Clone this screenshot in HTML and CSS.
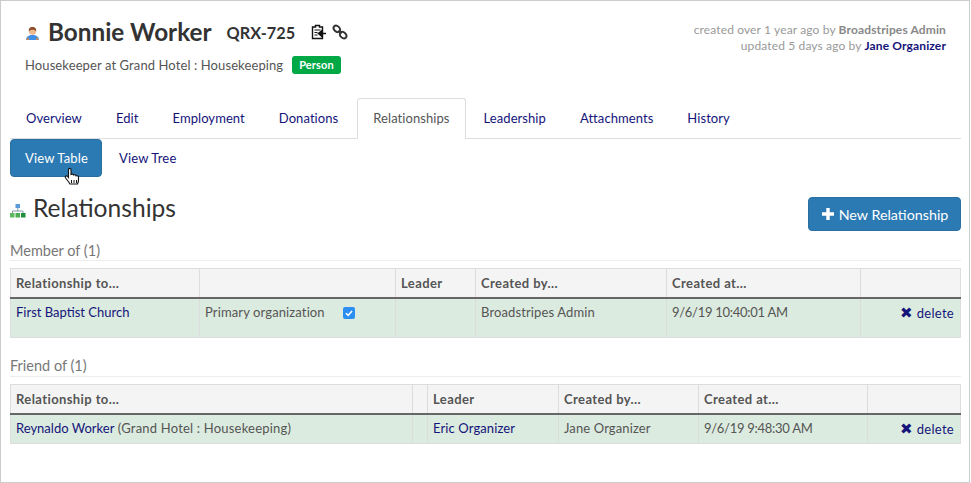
FILE: index.html
```html
<!DOCTYPE html>
<html lang="en">
<head>
<meta charset="utf-8">
<title>Bonnie Worker</title>
<link rel="stylesheet" href="styles.css">
</head>
<body>
<div class="frame">
  <header class="head">
    <div class="who">
      <div class="title-row">
        <svg class="person" viewBox="0 0 14 14" width="15" height="15"><path d="M1 13c0-3 2.500-4.500 6-4.500s6 1.500 6 4.500z" fill="#3d8fe8"/><path d="M1 13l2-3 1 3zM13 13l-2-3-1 3z" fill="#c98a5a"/><circle cx="7" cy="5" r="3.300" fill="#eeb98f"/><path d="M3.600 5.200C3.200 1.800 5 1 7 1s3.800.8 3.400 4.200C9.800 3.600 8 3.400 7 3.400s-2.800.2-3.400 1.800z" fill="#8a4a25"/></svg>
        <h1 class="name">Bonnie Worker</h1>
        <span class="code">QRX-725</span>
        <svg class="clip" viewBox="0 0 16 16" width="16" height="16"><path d="M2.500 3h3V1.500h4V3h3v11.500h-10z" fill="#fff" stroke="#111" stroke-width="1.400"/><path d="M4.500 6h6M4.500 8.500h3M4.500 11h3" stroke="#111" stroke-width="1.200"/><path d="M16 9.500H9.500M11.500 7l-3 2.500 3 2.500z" stroke="#111" stroke-width="1.600" fill="#111"/></svg>
        <svg class="chain" viewBox="0 0 16 16" width="16" height="16"><ellipse cx="4.800" cy="4.800" rx="3.600" ry="2.700" transform="rotate(45 4.800 4.800)" fill="none" stroke="#333" stroke-width="1.900"/><ellipse cx="11.200" cy="11.200" rx="3.600" ry="2.700" transform="rotate(45 11.200 11.200)" fill="none" stroke="#333" stroke-width="1.900"/><path d="M6.500 6.500l3 3" stroke="#333" stroke-width="2.200"/></svg>
      </div>
      <div class="sub-row">
        <span>Housekeeper at Grand Hotel : Housekeeping</span>
        <span class="badge">Person</span>
      </div>
    </div>
    <div class="meta">
      <div>created over 1 year ago by <b>Broadstripes Admin</b></div>
      <div>updated 5 days ago by <a class="strong" href="#">Jane Organizer</a></div>
    </div>
  </header>

  <nav class="tabs">
    <a class="tab" href="#">Overview</a>
    <a class="tab" href="#">Edit</a>
    <a class="tab" href="#">Employment</a>
    <a class="tab" href="#">Donations</a>
    <a class="tab active" href="#">Relationships</a>
    <a class="tab" href="#">Leadership</a>
    <a class="tab" href="#">Attachments</a>
    <a class="tab" href="#">History</a>
  </nav>

  <nav class="pills">
    <a class="pill on" href="#">View Table
      <svg class="hand" viewBox="0 0 16 20" width="16" height="20"><path d="M4.500 2.500c0-1.500 2.500-1.500 2.500 0v5l1-.3c1-.2 1.500.2 1.500.8l1-.2c1-.2 1.500.3 1.500 1l.8-.1c1-.1 1.700.5 1.700 1.500v3.300c0 1.500-.5 2-1 3.500H6c-.8-1.500-2-3-4-5.500-1-1.300-1-2 0-2.500.7-.3 1.500.2 2.500 1.500z" fill="#fff" stroke="#111" stroke-width="1.100"/><path d="M7.500 13v3M10 13v3M12.500 13v3" stroke="#111" stroke-width="1"/></svg>
    </a>
    <a class="pill" href="#">View Tree</a>
  </nav>

  <div class="section-head">
    <h2 class="heading">
      <svg class="tree" viewBox="0 0 16 14" width="16" height="14"><rect x="5.500" y="0" width="4.500" height="4" fill="#5b9bd9"/><path d="M7.800 4v3M2.500 9V7h10.500v2" fill="none" stroke="#8a9aa8" stroke-width="1"/><rect x="0" y="9" width="4.500" height="4.500" fill="#5fb962"/><rect x="5.500" y="9" width="4.500" height="4.500" fill="#4cae4f"/><rect x="11" y="9" width="4.500" height="4.500" fill="#1e8f3a"/></svg>
      Relationships
    </h2>
    <a class="new-btn" href="#"><svg viewBox="0 0 14 14" width="14" height="14"><path d="M7 1v12M1 7h12" stroke="#fff" stroke-width="3.400"/></svg>New Relationship</a>
  </div>

  <h3 class="group first">Member of (1)</h3>
  <table class="grid">
    <colgroup><col class="m1"><col class="m2"><col class="m3"><col class="m4"><col class="m5"><col></colgroup>
    <thead><tr><th>Relationship to...</th><th></th><th>Leader</th><th>Created by...</th><th>Created at...</th><th></th></tr></thead>
    <tbody><tr class="tall">
      <td><a href="#">First Baptist Church</a></td>
      <td><span class="primary">Primary organization<span class="check"><svg viewBox="0 0 12 12" width="12" height="12"><path d="M3 6.200l2.200 2.200L9 4" fill="none" stroke="#fff" stroke-width="1.600"/></svg></span></span></td>
      <td></td>
      <td>Broadstripes Admin</td>
      <td class="date">9/6/19 10:40:01 AM</td>
      <td class="act"><a href="#"><span class="x">&#10006;</span> delete</a></td>
    </tr></tbody>
  </table>

  <h3 class="group">Friend of (1)</h3>
  <table class="grid">
    <colgroup><col class="f1"><col class="f2"><col class="f3"><col class="f4"><col class="f5"><col></colgroup>
    <thead><tr><th>Relationship to...</th><th></th><th>Leader</th><th>Created by...</th><th>Created at...</th><th></th></tr></thead>
    <tbody><tr>
      <td><a href="#">Reynaldo Worker</a> <span class="org">(Grand Hotel : Housekeeping)</span></td>
      <td></td>
      <td><a href="#">Eric Organizer</a></td>
      <td>Jane Organizer</td>
      <td class="date">9/6/19 9:48:30 AM</td>
      <td class="act"><a href="#"><span class="x">&#10006;</span> delete</a></td>
    </tr></tbody>
  </table>
</div>
</body>
</html>
```
FILE: styles.css
```css
* { box-sizing: border-box; }
html, body { margin: 0; padding: 0; background: #fff; }
body { font-family: Lato, "Open Sans", sans-serif; font-size: 13px; color: #555; }
a { color: #14147a; text-decoration: none; }

.frame {
  width: 970px;
  height: 483px;
  border: 1px solid #ccc;
  padding: 0 8px 0 9px;
  overflow: hidden;
}

.head { display: flex; justify-content: space-between; padding: 15px 15px 0 15px; height: 97px; }
.title-row { display: flex; align-items: center; height: 32px; }
.person { margin-right: 8px; margin-top: 2px; }
.name { margin: 0; font-size: 24.300px; font-weight: 700; color: #333; line-height: 32px; }
.code { margin-left: 15px; margin-right: 15px; font-size: 16.300px; font-weight: 700; color: #333; }
.clip { margin-right: 6px; }
.sub-row { display: flex; align-items: center; margin-top: 7px; height: 20px; color: #555; font-size: 13px; letter-spacing: .1px; }
.badge { margin-left: 9px; background: #00a846; color: #fff; font-weight: 700; font-size: 11px; padding: 0 7px; height: 18px; line-height: 18px; border-radius: 3px; }
.meta { text-align: right; color: #999; font-size: 12px; line-height: 16px; padding-top: 6px; letter-spacing: .13px; }
.meta b { font-weight: 700; color: #888; }
.strong { font-weight: 700; }

.tabs { display: flex; height: 41px; border-bottom: 1px solid #ddd; }
.tab { margin-left: -1px; margin-right: 1px; padding: 0 16px; line-height: 39px; height: 40px; font-size: 13px; letter-spacing: .07px; color: #14147a; border: 1px solid transparent; border-bottom: 0; }
.tab.active { margin-left: 1px; margin-right: 2px; padding: 0 15px; background: #fff; color: #555; border-color: #ddd; height: 41px; border-radius: 3px 3px 0 0; }

.pills { display: flex; height: 38px; }
.pill { position: relative; padding: 0 16px; line-height: 38px; font-size: 13px; letter-spacing: .15px; border-radius: 4px; white-space: nowrap; }
.pill.on { width: 92px; background: #2c7ab3; color: #fff; margin-right: 1px; border: 1px solid #2a6f9f; padding: 0 14px; line-height: 36px; }
.hand { position: absolute; left: 53px; top: 27px; }

.section-head { display: flex; justify-content: space-between; height: 54px; align-items: flex-start; }
.heading { margin: 15px 0 0; font-size: 24.600px; font-weight: 400; color: #333; line-height: 32px; display: flex; align-items: center; gap: 7px; }
.tree { margin-top: 6px; }
.new-btn { display: flex; align-items: center; justify-content: center; gap: 4px; margin-top: 20px; width: 153px; height: 34px; background: #2c7ab3; border: 1px solid #2a6f9f; border-radius: 4px; color: #fff; font-size: 14.300px; }

.group { margin: 17px 0 7px; height: 22px; padding-top: 1px; font-size: 14.500px; font-weight: 400; color: #777; border-bottom: 1px solid #eee; line-height: 20px; }
.group.first { margin-top: 9px; height: 21px; }

.grid { table-layout: fixed; width: 951px; border-collapse: collapse; font-size: 13px; }
.grid th, .grid td { border: 1px solid #ddd; padding: 0 5px; text-align: left; vertical-align: top; }
.grid th { line-height: 28px; background: #f4f4f4; color: #555; font-weight: 700; letter-spacing: .4px; border-bottom: 2px solid #666; }
.grid td { height: 30px; padding-top: 5px; line-height: 17px; background: #dcebdf; color: #555; letter-spacing: .12px; }
.grid td:first-child a { letter-spacing: 0; }
.grid .tall td { height: 39px; }
.grid .date { letter-spacing: -.28px; }
.grid .act { text-align: right; letter-spacing: .3px; padding-right: 6px; }
.org { letter-spacing: .2px; }
.x { font-size: 15px; color: #14147a; }

.primary { display: inline-flex; align-items: center; }
.check { display: inline-block; width: 12px; height: 12px; margin-left: 18px; background: #2b8ef0; border-radius: 2px; line-height: 0; }

col.m1 { width: 189px; } col.m2 { width: 196px; } col.m3 { width: 80px; } col.m4 { width: 191px; } col.m5 { width: 194px; }
col.f1 { width: 402px; } col.f2 { width: 15px; } col.f3 { width: 131px; } col.f4 { width: 140px; } col.f5 { width: 169px; }
```
